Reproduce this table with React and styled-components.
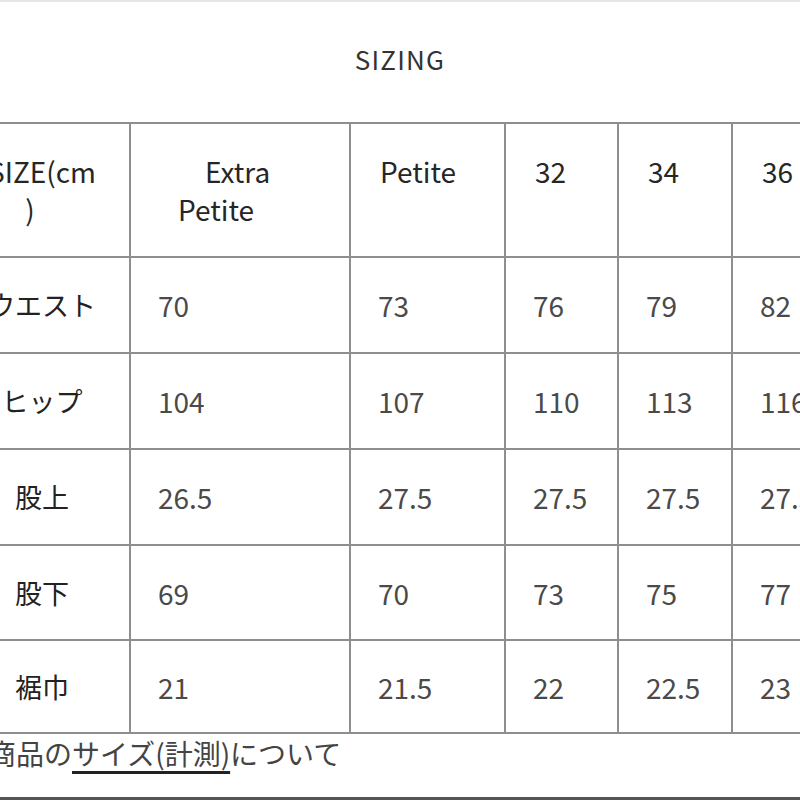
import React from 'react'
import styled, { createGlobalStyle } from 'styled-components'

const GlobalStyle = createGlobalStyle`
  body {
    margin: 0;
    background: #fff;
    font-family: "Noto Sans CJK JP", "Noto Sans", sans-serif;
  }
`

const Page = styled.div`
  width: 800px;
  height: 800px;
  box-sizing: border-box;
  overflow: hidden;
  display: flex;
  flex-direction: column;
  border-top: 2px solid #e6e6e6;
  border-bottom: 3px solid #555;
  background: #fff;
`

const TitleBar = styled.div`
  height: 120px;
  flex-shrink: 0;
  display: flex;
  align-items: center;
  justify-content: center;
  padding-bottom: 7px;
  box-sizing: border-box;
`

const Title = styled.h1`
  margin: 0;
  font-size: 26px;
  font-weight: 400;
  letter-spacing: 1.2px;
  color: #333;
`

const Grid = styled.div`
  display: grid;
  grid-template-columns: 174px 218px 153px 111px 112px 112px;
  grid-template-rows: 132px 94px 94px 94px 93px 91px;
  gap: 2px;
  padding: 2px;
  background: #8e8e8e;
  margin-left: -47px;
  width: max-content;
  flex-shrink: 0;
`

const Cell = styled.div`
  background: #fff;
  font-size: 28px;
  line-height: 38px;
  display: flex;
  align-items: center;
  padding-left: 27px;
  color: #4a4a4a;
  white-space: nowrap;
`

const LabelCell = styled(Cell)`
  justify-content: center;
  padding-left: 0;
  color: #222;
  font-size: 27px;
`

const HeadCell = styled.div`
  background: #fff;
  font-size: 28px;
  line-height: 38px;
  color: #262626;
  padding-top: 28px;
  padding-left: ${p => p.$pad || 27}px;
  text-indent: ${p => p.$indent || 0}px;
  text-align: ${p => (p.$center ? 'center' : 'left')};
  ${p => (p.$center ? 'padding-left: 0;' : '')}
`

const Paren = styled.span`
  padding-right: 24px;
`

const Footer = styled.p`
  margin: 0 0 0 -12px;
  font-size: 28px;
  line-height: 38px;
  color: #444;
  white-space: nowrap;
`

const Link = styled.span`
  text-decoration: underline;
  text-decoration-color: #222;
  text-decoration-thickness: 3px;
  text-underline-offset: 6px;
`

const sizes = ['32', '34', '36']

const rows = [
  { label: 'ウエスト', values: ['70', '73', '76', '79', '82'] },
  { label: 'ヒップ', values: ['104', '107', '110', '113', '116'] },
  { label: '股上', values: ['26.5', '27.5', '27.5', '27.5', '27.5'] },
  { label: '股下', values: ['69', '70', '73', '75', '77'] },
  { label: '裾巾', values: ['21', '21.5', '22', '22.5', '23'] },
]

export default function App() {
  return (
    <>
      <GlobalStyle />
      <Page>
        <TitleBar>
          <Title>SIZING</Title>
        </TitleBar>
        <Grid>
          <HeadCell $center>
            SIZE(cm
            <br />
            <Paren>)</Paren>
          </HeadCell>
          <HeadCell $pad={47} $indent={27}>Extra Petite</HeadCell>
          <HeadCell $pad={29}>Petite</HeadCell>
          {sizes.map(s => (
            <HeadCell key={s} $pad={29}>{s}</HeadCell>
          ))}
          {rows.map(r => (
            <React.Fragment key={r.label}>
              <LabelCell>{r.label}</LabelCell>
              {r.values.map((v, i) => (
                <Cell key={i}>{v}</Cell>
              ))}
            </React.Fragment>
          ))}
        </Grid>
        <Footer>
          商品の<Link>サイズ(計測)</Link>について
        </Footer>
      </Page>
    </>
  )
}
